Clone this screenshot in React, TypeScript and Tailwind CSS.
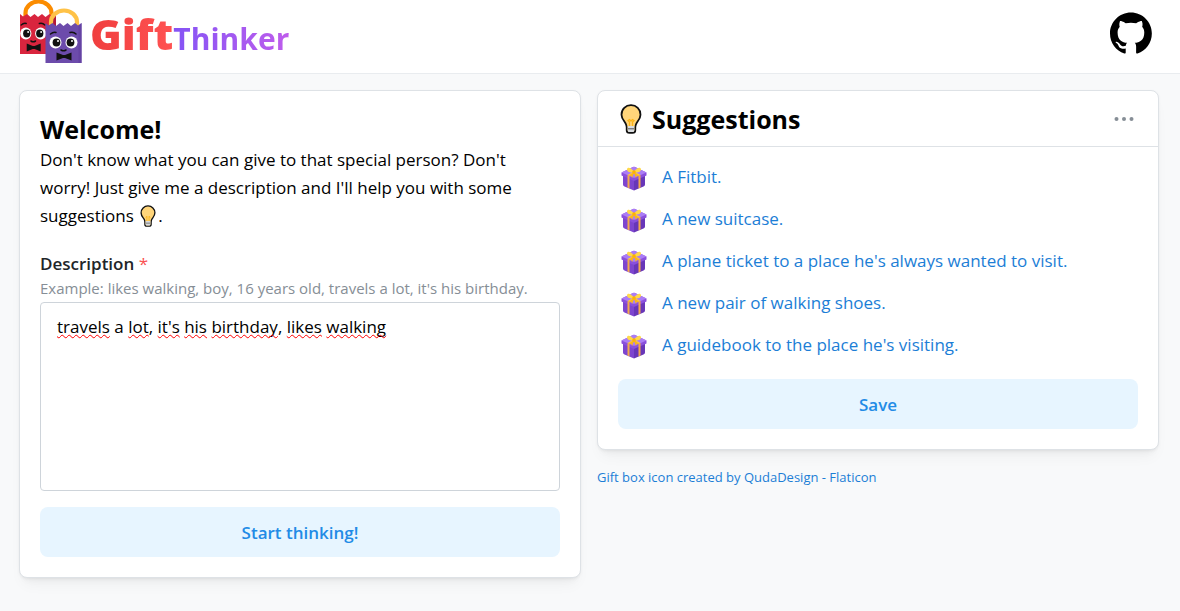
import { Fragment, useState } from "react";

const suggestions = [
  "A Fitbit.",
  "A new suitcase.",
  "A plane ticket to a place he's always wanted to visit.",
  "A new pair of walking shoes.",
  "A guidebook to the place he's visiting.",
];

const initialText = "travels a lot, it's his birthday, likes walking";

type BagProps = { body: string; shade: string; handle: string; face: string };

function Bag({ body, shade, handle, face }: BagProps) {
  return (
    <>
      <path d="M5.500 17V13a13 11.500 0 0 1 26 0v4" fill="none" stroke={handle} strokeWidth="4.200" />
      <path d="M0 14l3 2.500 4-2.500 3.500 3 4-3 3.500 3 4-3 3.500 3 4-3 3 2.500 3.500-2.500V54H0z" fill={body} />
      <path d="M33 17l3-3V54h-3z" fill={shade} />
      <g transform={face}>
        <circle cx="10" cy="33.500" r="6" fill="#fff" />
        <circle cx="26" cy="33.500" r="6" fill="#fff" />
        <circle cx="11" cy="33.500" r="3.900" fill="#111" />
        <circle cx="25" cy="33.500" r="3.900" fill="#111" />
        <circle cx="12.500" cy="32" r="1" fill="#fff" />
        <circle cx="26.500" cy="32" r="1" fill="#fff" />
        <path d="M5 25q3-2.500 5.500-1.500M24.500 23.500q3.500-1 6 1.500M15.500 41q2.500 1.500 5 0" fill="none" stroke="#111" strokeWidth="1.500" strokeLinecap="round" />
        <path d="M11 43.500l6.500 2.500h2l6.500-2.500v8L19.500 49h-2L11 51.500z" fill="#111" />
      </g>
    </>
  );
}

function Logo() {
  return (
    <svg width="62" height="64" viewBox="0 0 62 64" aria-hidden="true" className="shrink-0">
      <Bag body="#d9253e" shade="#b3183a" handle="#fb8c00" face="translate(-3.500 0) scale(.93 1)" />
      <g transform="translate(25.500 9)">
        <Bag body="#6c4bab" shade="#6543a3" handle="#ffc247" face="translate(0 0)" />
      </g>
    </svg>
  );
}

function Bulb({ className }: { className: string }) {
  return (
    <svg viewBox="0 0 22 30" aria-hidden="true" className={className}>
      <path
        d="M11 1.200a9.400 9.400 0 0 0-9.500 9.500c0 3.600 2 5.600 3.700 8 1 1.500 1.300 2.600 1.500 4.300v3.200c0 1.700 1.300 2.700 2.800 2.700h3c1.500 0 2.800-1 2.800-2.700V23c.2-1.700.5-2.800 1.500-4.300 1.700-2.400 3.700-4.400 3.700-8A9.400 9.400 0 0 0 11 1.200z"
        fill="#ffd57a"
        stroke="#111"
        strokeWidth="1.800"
      />
      <path d="M7.700 22h6.600v4.200c0 1.200-.8 1.900-1.800 1.900h-3c-1 0-1.800-.7-1.800-1.900z" fill="#d9dce0" />
      <path d="M8 24.800h6" stroke="#555" strokeWidth="1" />
      <path d="M9.500 22v-4L8 16.500l1.500-1L11 17l1.500-1.500 1.500 1-1.500 1.500v4" fill="none" stroke="#fbb317" strokeWidth="1.300" />
    </svg>
  );
}

function Gift() {
  return (
    <svg viewBox="0 0 26 26" width="26" height="26" aria-hidden="true" className="shrink-0">
      <path d="M2 9l11 5v11.500L3.500 21.500Q2 21 2 19.500z" fill="#7d45cf" />
      <path d="M24 9l-11 5v11.500l9.500-4Q24 21 24 19.500z" fill="#6836b8" />
      <path d="M.5 7.500L12 2q1-.5 2 0l11.500 5.500v3L14 15.500q-1 .4-2 0L.5 10.500z" fill="#8a50dc" />
      <path d="M.5 7.500L12 2q1-.5 2 0l11.500 5.500L14 12.500q-1 .4-2 0z" fill="#ab7df5" />
      <path d="M6.500 10l2 1v12.500l-2-.9zM17.500 11l2-1v12.600l-2 .9z" fill="#f5a94c" />
      <path d="M6.500 10L17.500 4l2 1L8.500 11zM19.500 10L8.500 4l-2 1L17.500 11z" fill="#ffc83d" />
      <path d="M13 7C10 2 6 2 6 4.500S10 8 13 7zM13 7c3-5 7-5 7-2.500S16 8 13 7z" fill="#ffd94a" />
      <path d="M13 7l-5.500 4 3 .2.500 2L13 8l2 5.200.5-2 3-.2z" fill="#f9b51e" />
      <circle cx="13" cy="7" r="1.800" fill="#ffb300" />
    </svg>
  );
}

function GitHubMark() {
  return (
    <svg viewBox="0 0 98 96" width="42" height="42" aria-hidden="true">
      <path
        fill="#000"
        fillRule="evenodd"
        d="M48.854 0C21.839 0 0 22 0 49.217c0 21.756 13.993 40.172 33.405 46.690 2.427.49 3.316-1.059 3.316-2.362 0-1.141-.08-5.052-.08-9.127-13.590 2.934-16.420-5.867-16.420-5.867-2.184-5.704-5.420-7.170-5.420-7.170-4.448-3.015.324-3.015.324-3.015 4.934.326 7.523 5.052 7.523 5.052 4.367 7.496 11.404 5.378 14.235 4.074.404-3.178 1.699-5.378 3.074-6.600-10.839-1.141-22.243-5.378-22.243-24.283 0-5.378 1.940-9.778 5.014-13.200-.485-1.222-2.184-6.275.486-13.038 0 0 4.125-1.304 13.426 5.052a46.970 46.970 0 0 1 12.214-1.630c4.125 0 8.330.571 12.213 1.630 9.302-6.356 13.427-5.052 13.427-5.052 2.670 6.763.97 11.816.485 13.038 3.155 3.422 5.015 7.822 5.015 13.200 0 18.905-11.404 23.060-22.324 24.283 1.780 1.548 3.316 4.481 3.316 9.126 0 6.600-.08 11.897-.08 13.526 0 1.304.89 2.853 3.316 2.364 19.412-6.520 33.405-24.935 33.405-46.691C97.707 22 75.788 0 48.854 0z"
      />
    </svg>
  );
}

function SpellingMarks({ text }: { text: string }) {
  return (
    <div
      aria-hidden="true"
      className="pointer-events-none absolute inset-0 overflow-hidden border border-transparent px-4 py-2.5 text-[17px] leading-7 whitespace-pre-wrap text-transparent"
    >
      {text.split(/([A-Za-z']{2,})/).map((part, i) =>
        i % 2 ? (
          <span key={i} className="underline decoration-[#ff0000] decoration-wavy decoration-1 underline-offset-1 [text-decoration-skip-ink:none]">
            {part}
          </span>
        ) : (
          <Fragment key={i}>{part}</Fragment>
        ),
      )}
    </div>
  );
}

const card = "rounded-lg border border-[#dee2e6] bg-white shadow-[0_1px_3px_rgba(0,0,0,0.05),0_10px_15px_-5px_rgba(0,0,0,0.05),0_7px_7px_-5px_rgba(0,0,0,0.04)]";
const action = "h-[50px] w-full rounded-lg bg-[#e7f5ff] pt-0.5 text-[17px] font-semibold text-[#228be6]";

export default function App() {
  const [text, setText] = useState(initialText);

  return (
    <div className="min-h-screen bg-[#f8f9fa] font-['Open_Sans','Noto_Sans',sans-serif] text-[17px] leading-7 text-black">
      <header className="flex h-[74px] items-start justify-between border-b border-[#e9ecef] bg-white pr-7 pl-5">
        <a href="#home" className="flex items-start gap-2">
          <Logo />
          <span className="flex items-baseline pt-1.5 font-bold">
            <span className="bg-linear-to-r from-[#f03e3e] to-[#ff5252] bg-clip-text font-['Noto_Sans','Open_Sans',sans-serif] text-[43px] leading-[56px] font-black text-transparent">Gift</span>
            <span className="bg-linear-to-r from-[#8453f5] to-[#be5cec] bg-clip-text text-[30px] leading-[56px] text-transparent">Thinker</span>
          </span>
        </a>
        <a href="#github" aria-label="GitHub" className="pt-3">
          <GitHubMark />
        </a>
      </header>

      <main className="grid grid-cols-2 items-start gap-4 pt-4 pr-[21px] pb-8 pl-[19px]">
        <section className={`${card} p-5`}>
          <h1 className="pt-[3px] pb-0.5 text-[25px] leading-[30px] font-bold">Welcome!</h1>
          <p>
            Don't know what you can give to that special person? Don't worry! Just give me a description and I'll help you with some suggestions{" "}
            <Bulb className="mx-0.5 inline-block h-[22px] w-4 align-[-5px]" />.
          </p>
          <label htmlFor="description" className="mt-5 block font-semibold text-[#212529]">
            Description <span className="font-normal text-[#fa5252]">*</span>
          </label>
          <p id="hint" className="text-[15px] leading-5 text-[#868e96]">
            Example: likes walking, boy, 16 years old, travels a lot, it's his birthday.
          </p>
          <div className="relative mt-1">
            <textarea
              id="description"
              aria-describedby="hint"
              spellCheck={false}
              value={text}
              onChange={(e) => setText(e.target.value)}
              className="block h-[189px] w-full resize-none rounded border border-[#ced4da] bg-white px-4 py-2.5 text-[17px] leading-7 outline-none"
            />
            <SpellingMarks text={text} />
          </div>
          <button type="button" className={`${action} mt-4`}>
            Start thinking!
          </button>
        </section>

        <div>
          <section className={card}>
            <div className="flex h-14 items-center justify-between border-b border-[#dee2e6] px-5">
              <h2 className="flex items-center gap-2.5 text-[25px] leading-9 font-bold">
                <Bulb className="ml-0.5 h-[30px] w-[22px]" />
                Suggestions
              </h2>
              <button type="button" aria-label="More options" className="flex h-7 w-7 items-center justify-center">
                <svg viewBox="0 0 20 4" width="20" height="4" fill="#868e96" aria-hidden="true">
                  <circle cx="2.500" cy="2" r="2" />
                  <circle cx="10" cy="2" r="2" />
                  <circle cx="17.500" cy="2" r="2" />
                </svg>
              </button>
            </div>
            <div className="px-5 pt-4 pb-5">
              <ul className="flex flex-col gap-3.5">
                {suggestions.map((item) => (
                  <li key={item}>
                    <a href="#suggestion" className="flex h-7 items-end gap-[15px] pl-[3px] text-[#1c7ed6]">
                      <Gift />
                      {item}
                    </a>
                  </li>
                ))}
              </ul>
              <button type="button" className={`${action} mt-5`}>
                Save
              </button>
            </div>
          </section>
          <a href="#credits" className="mt-[15px] block text-[13px] leading-6 text-[#1c7ed6]">
            Gift box icon created by QudaDesign - Flaticon
          </a>
        </div>
      </main>
    </div>
  );
}
